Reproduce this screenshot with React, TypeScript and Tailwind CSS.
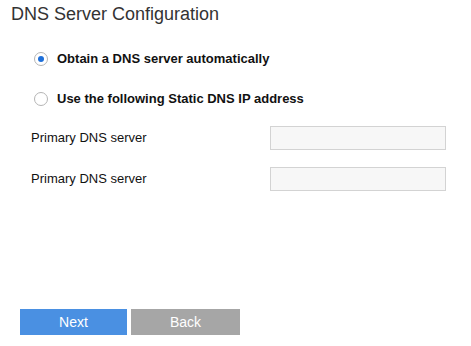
export default function App() {
  return (
    <div className="w-[471px] h-[346px] bg-white relative" style={{ fontFamily: '"Liberation Sans", Arial, sans-serif' }}>
      <div className="flex flex-col">
        <h1 className="pl-[11px] pt-[4px] text-[18px] leading-[21px] text-[#333333] font-normal">DNS Server Configuration</h1>
        <div className="flex flex-col pl-[34px] mt-[27px] gap-[27px]">
          <label className="flex items-center gap-[9px] h-[13px]">
            <span className="w-[14px] h-[14px] rounded-full border border-[#b5b5b5] bg-white flex items-center justify-center">
              <span className="w-[6px] h-[6px] rounded-full bg-[#1e6fd9]" />
            </span>
            <span className="text-[13px] font-bold text-[#111111]">Obtain a DNS server automatically</span>
          </label>
          <label className="flex items-center gap-[9px] h-[13px]">
            <span className="w-[14px] h-[14px] rounded-full border border-[#b5b5b5] bg-white" />
            <span className="text-[13px] font-bold text-[#111111]">Use the following Static DNS IP address</span>
          </label>
        </div>
        <div className="flex flex-col pl-[31px] mt-[21px] gap-[17px]">
          <div className="flex items-center h-[24px]">
            <span className="w-[239px] text-[13px] text-[#111111]">Primary DNS server</span>
            <input className="w-[176px] h-[24px] bg-[#f7f7f7] border border-[#d3d3d3] outline-none" />
          </div>
          <div className="flex items-center h-[24px]">
            <span className="w-[239px] text-[13px] text-[#111111]">Primary DNS server</span>
            <input className="w-[176px] h-[24px] bg-[#f7f7f7] border border-[#d3d3d3] outline-none" />
          </div>
        </div>
        <div className="flex pl-[20px] mt-[118px] gap-[4px]">
          <button className="w-[107px] h-[26px] bg-[#4a90e2] text-white text-[14px]">Next</button>
          <button className="w-[109px] h-[26px] bg-[#a6a6a6] text-white text-[14px]">Back</button>
        </div>
      </div>
    </div>
  );
}
